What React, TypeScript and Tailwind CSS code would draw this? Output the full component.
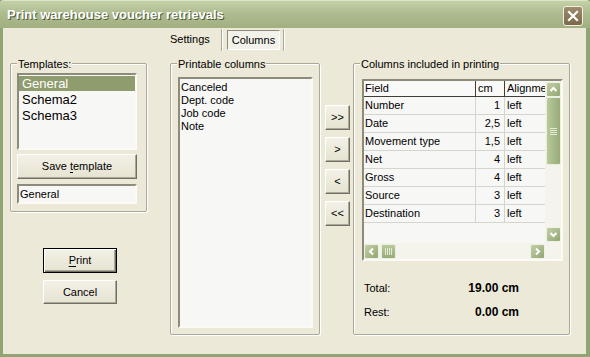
import React from "react";

type Dir = "up" | "down" | "left" | "right";

function SArrow({ dir }: { dir: Dir }) {
  const pts =
    dir === "up"
      ? "3.5,8 6.5,5 9.5,8"
      : dir === "down"
      ? "3.5,5 6.5,8 9.5,5"
      : dir === "left"
      ? "8,3.5 5,6.5 8,9.5"
      : "5,3.5 8,6.5 5,9.5";
  return (
    <div className="w-[15px] h-[15px] shrink-0 rounded-[2px] border border-[#eef2e4] bg-gradient-to-br from-[#c3d1a6] to-[#93a672] flex items-center justify-center">
      <svg width="13" height="13" viewBox="0 0 13 13">
        <polyline points={pts} fill="none" stroke="#ffffff" strokeWidth="2" />
      </svg>
    </div>
  );
}

function GroupBox({
  label,
  className = "",
  children,
}: {
  label: string;
  className?: string;
  children?: React.ReactNode;
}) {
  return (
    <div
      className={`relative shrink-0 border border-[#aca899] rounded-[2px] shadow-[inset_1px_1px_0_#ffffff,1px_1px_0_#ffffff] ${className}`}
    >
      <span className="absolute -top-[6px] left-[6px] bg-[#ece9d8] px-px leading-[13px] whitespace-nowrap">
        {label}
      </span>
      {children}
    </div>
  );
}

function Btn({
  className = "",
  def = false,
  children,
}: {
  className?: string;
  def?: boolean;
  children?: React.ReactNode;
}) {
  return (
    <button
      type="button"
      className={`shrink-0 flex items-center justify-center leading-[13px] bg-gradient-to-b from-[#f3f1e7] to-[#e6e3d1] ${
        def
          ? "border border-black shadow-[inset_1px_1px_0_#ffffff,inset_-1px_-1px_0_#716f64,inset_-2px_-2px_0_#aca899]"
          : "border border-t-white border-l-white border-b-[#716f64] border-r-[#716f64] shadow-[inset_-1px_-1px_0_#aca899]"
      } ${className}`}
    >
      {children}
    </button>
  );
}

const sunken =
  "border-2 border-t-[#8d8b7b] border-l-[#8d8b7b] border-b-[#fbfaf5] border-r-[#fbfaf5] bg-[#f7f7f5]";

const rows: [string, string][] = [
  ["Number", "1"],
  ["Date", "2,5"],
  ["Movement type", "1,5"],
  ["Net", "4"],
  ["Gross", "4"],
  ["Source", "3"],
  ["Destination", "3"],
];

export default function App() {
  return (
    <div className="w-[590px] h-[357px] flex flex-col overflow-hidden bg-[#8da472] font-['Liberation_Sans',Arial,sans-serif] text-[11px] text-black">
      {/* Title bar */}
      <div className="h-[28px] shrink-0 flex items-center pl-[7px] pr-[7px] rounded-t-[4px] border-t border-[#dde5c9] bg-gradient-to-b from-[#c4d0a7] via-[#adba8e] to-[#a2af81]">
        <span className="text-[13px] font-bold text-white leading-[15px] [text-shadow:1px_1px_0_#4d5a36]">
          Print warehouse voucher retrievals
        </span>
        <div className="ml-auto mt-[3px] w-[20px] h-[20px] rounded-[3px] border border-[#f3efe0] bg-gradient-to-b from-[#9d8d6d] to-[#7a6a4c] flex items-center justify-center">
          <svg width="12" height="12" viewBox="0 0 12 12">
            <path d="M2 2 L10 10 M10 2 L2 10" stroke="#ffffff" strokeWidth="2.2" strokeLinecap="square" />
          </svg>
        </div>
      </div>

      {/* Body */}
      <div className="flex-1 flex flex-col bg-[#ece9d8] border-l-[3px] border-r-[4px] border-b-[3px] border-[#8ea673]">
        {/* Tabs */}
        <div className="h-[24px] shrink-0 flex items-center pl-[167px]">
          <span className="leading-[13px] mb-[1px]">Settings</span>
          <div className="ml-[11px] w-[2px] h-[22px] border-l border-[#aca899] border-r border-r-white" />
          <div className="ml-[4px] h-[20px] px-[4px] flex items-center border border-t-[#8e8c7c] border-l-[#8e8c7c] border-b-white border-r-white bg-[#f3f2ea]">
            <span className="leading-[13px]">Columns</span>
          </div>
          <div className="ml-[3px] w-[2px] h-[22px] border-l border-[#aca899] border-r border-r-white" />
        </div>

        {/* Main */}
        <div className="flex mt-[11px] ml-[7px]">
          {/* Left column */}
          <div className="w-[137px] shrink-0 flex flex-col">
            <GroupBox label="Templates:" className="w-[137px] h-[149px] pt-[9px] pl-[6px]">
              <div className="flex flex-col">
                <div className={`w-[120px] h-[77px] ${sunken} pt-px text-[13px] leading-[16px]`}>
                  <div className="bg-[#8f9c6e] text-white pl-[3px] h-[15px] leading-[15px]">General</div>
                  <div className="pl-[3px] h-[17px] leading-[17px]">Schema2</div>
                  <div className="pl-[3px] h-[16px] leading-[16px]">Schema3</div>
                </div>
                <Btn className="mt-[4px] w-[120px] h-[25px]">
                  Save <span className="underline underline-offset-[2px] ml-[3px]">t</span>emplate
                </Btn>
                <div className={`mt-[5px] w-[120px] h-[20px] ${sunken} flex items-center pl-px leading-[13px]`}>
                  General
                </div>
              </div>
            </GroupBox>
            <Btn def className="mt-[36px] ml-[33px] w-[74px] h-[25px]">
              <span className="underline underline-offset-[2px]">P</span>rint
            </Btn>
            <Btn className="mt-[7px] ml-[33px] w-[74px] h-[24px]">Cancel</Btn>
          </div>

          {/* Printable columns */}
          <GroupBox label="Printable columns" className="ml-[23px] w-[150px] h-[272px] pt-[13px] pl-[7px]">
            <div className={`w-[135px] h-[251px] ${sunken} pt-[2px] pl-px leading-[13px]`}>
              <div>Canceled</div>
              <div>Dept. code</div>
              <div>Job code</div>
              <div>Note</div>
            </div>
          </GroupBox>

          {/* Arrow buttons */}
          <div className="ml-[5px] pt-[42px] flex flex-col gap-[7px] shrink-0">
            <Btn className="w-[25px] h-[25px]">&gt;&gt;</Btn>
            <Btn className="w-[25px] h-[25px]">&gt;</Btn>
            <Btn className="w-[25px] h-[25px]">&lt;</Btn>
            <Btn className="w-[25px] h-[25px]">&lt;&lt;</Btn>
          </div>

          {/* Columns included */}
          <GroupBox label="Columns included in printing" className="ml-[3px] w-[217px] h-[272px] pt-[15px] pl-[8px]">
            <div className="w-[201px] h-[182px] border-2 border-t-[#8d8b7b] border-l-[#8d8b7b] border-b-[#fbfaf5] border-r-[#fbfaf5] bg-[#f7f7f5] flex flex-col">
              <div className="flex h-[162px]">
                <div className="w-[181px] overflow-hidden flex flex-col">
                  <div className="h-[16px] flex border-b border-[#3f3f38] leading-[13px] bg-[#f9f9f7]">
                    <div className="w-[112px] shrink-0 border-r border-[#3f3f38] pl-[1px] flex items-center">Field</div>
                    <div className="w-[29px] shrink-0 border-r border-[#3f3f38] pl-[2px] flex items-center">cm</div>
                    <div className="flex-1 pl-[2px] flex items-center whitespace-nowrap overflow-hidden">Alignment</div>
                  </div>
                  {rows.map(([f, v]) => (
                    <div key={f} className="h-[18px] flex border-b border-[#d6d5cd] leading-[13px]">
                      <div className="w-[112px] shrink-0 border-r border-[#d6d5cd] pl-[1px] flex items-center">{f}</div>
                      <div className="w-[29px] shrink-0 border-r border-[#d6d5cd] pr-[4px] flex items-center justify-end">{v}</div>
                      <div className="flex-1 pl-[2px] flex items-center">left</div>
                    </div>
                  ))}
                </div>
                {/* Vertical scrollbar */}
                <div className="w-[16px] shrink-0 flex flex-col bg-[#f4f3ec] pl-px">
                  <div className="mt-px">
                    <SArrow dir="up" />
                  </div>
                  <div className="w-[15px] h-[68px] rounded-[2px] border border-[#e9eedd] bg-gradient-to-r from-[#b9c99c] to-[#98ab77] flex flex-col items-center justify-center gap-[1px]">
                    <div className="w-[7px] h-px bg-[#e3ead4]" />
                    <div className="w-[7px] h-px bg-[#e3ead4]" />
                    <div className="w-[7px] h-px bg-[#e3ead4]" />
                    <div className="w-[7px] h-px bg-[#e3ead4]" />
                  </div>
                  <div className="flex-1" />
                  <div className="mb-px">
                    <SArrow dir="down" />
                  </div>
                </div>
              </div>
              {/* Horizontal scrollbar */}
              <div className="flex h-[16px]">
                <div className="w-[181px] flex items-center bg-[#f4f3ec]">
                  <SArrow dir="left" />
                  <div className="ml-[2px] w-[15px] h-[15px] rounded-[2px] border border-[#e9eedd] bg-gradient-to-b from-[#b9c99c] to-[#98ab77] flex items-center justify-center gap-[1px]">
                    <div className="w-px h-[7px] bg-[#e3ead4]" />
                    <div className="w-px h-[7px] bg-[#e3ead4]" />
                    <div className="w-px h-[7px] bg-[#e3ead4]" />
                    <div className="w-px h-[7px] bg-[#e3ead4]" />
                  </div>
                  <div className="flex-1" />
                  <SArrow dir="right" />
                </div>
                <div className="w-[16px] bg-[#f4f3ec]" />
              </div>
            </div>

            <div className="mt-[20px] ml-[2px] w-[155px] h-[14px] flex items-center justify-between">
              <span className="leading-[13px]">Total:</span>
              <span className="font-bold text-[12px] leading-[14px]">19.00 cm</span>
            </div>
            <div className="mt-[10px] ml-[2px] w-[155px] h-[14px] flex items-center justify-between">
              <span className="leading-[13px]">Rest:</span>
              <span className="font-bold text-[12px] leading-[14px]">0.00 cm</span>
            </div>
          </GroupBox>
        </div>
      </div>
    </div>
  );
}
